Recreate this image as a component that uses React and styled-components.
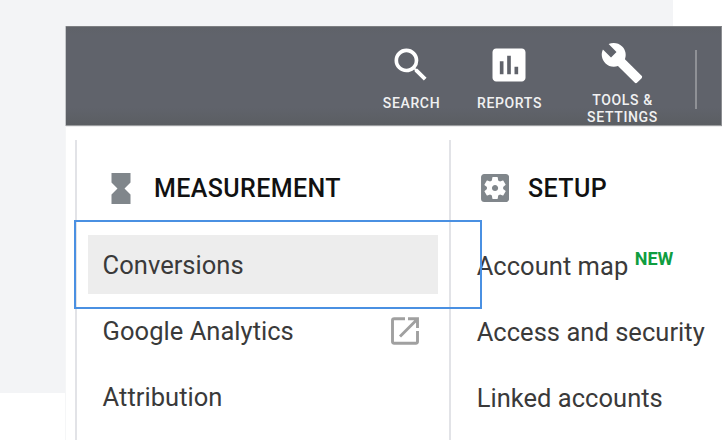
import React from "react";
import styled, { createGlobalStyle } from "styled-components";

const GlobalStyle = createGlobalStyle`
  *, *::before, *::after { box-sizing: border-box; }
  html, body { margin: 0; background: #fff; overflow: hidden; }
  body { font-family: Roboto, "Liberation Sans", sans-serif; }
  svg { display: block; flex: none; }
`;

const Page = styled.main`
  width: 722px;
  height: 440px;
  padding: 26px 0 0 66px;
  overflow: hidden;
  background: linear-gradient(#f3f4f6, #f3f4f6) 0 0 / 673px 393px no-repeat #fff;
`;

const Panel = styled.section`
  width: 656px;
  height: 414px;
  background: #fff;
  box-shadow: -1px 0 0 #f5f6f7;
`;

const TopBar = styled.header`
  display: flex;
  align-items: flex-start;
  height: 100px;
  padding-left: 305px;
  background: linear-gradient(#5f6268 0, #60636b 8px, #60636b 80px, #5b5e62 98px);
  border-top: 1px solid #7d7f82;
  border-bottom: 1px solid #9a9c9e;
  border-right: 1px solid #8b8d91;
  box-shadow: -1px 0 0 #c5c7ca, 0 1px 0 #ededee;
  color: #f1f1f2;
`;

const Tool = styled.div`
  display: flex;
  flex-direction: column;
  align-items: center;
  width: ${(p) => p.$width}px;
  padding-top: ${(p) => p.$top}px;
`;

const ToolLabel = styled.span`
  margin-top: ${(p) => p.$gap}px;
  padding-left: 1px;
  font-size: 14px;
  font-weight: 500;
  line-height: 17px;
  letter-spacing: 0.65px;
  text-align: center;
  white-space: pre-line;
`;

const BarDivider = styled.span`
  width: 2px;
  height: 59px;
  margin: 23px 0 0 18px;
  background: #8f9196;
`;

const Columns = styled.div`
  display: flex;
  height: 300px;
  margin: 14px 0 0 9px;
`;

const Column = styled.section`
  flex: none;
  width: ${(p) => p.$width}px;
  padding: ${(p) => p.$padding};
  border-left: 2px solid #e2e3e7;
`;

const Heading = styled.h2`
  display: flex;
  align-items: center;
  height: 32px;
  margin: 32px 0 ${(p) => p.$below}px;
  padding-left: ${(p) => p.$indent}px;
  gap: ${(p) => p.$gap}px;
  color: #111;
  font-size: 25px;
  font-weight: 500;
  letter-spacing: 0.4px;
`;

const Item = styled.div`
  display: flex;
  align-items: center;
  height: 59px;
  margin-bottom: 7px;
  padding: ${(p) => p.$padding || "0"};
  background: ${(p) => (p.$active ? "#ededed" : "transparent")};
  color: #3a3a3a;
  font-size: 25.5px;
  line-height: 30px;
  letter-spacing: 0.03px;
  white-space: nowrap;

  svg { margin-left: auto; }
`;

const NewTag = styled.sup`
  align-self: flex-start;
  margin: 13px 0 0 6.5px;
  color: #0f9d40;
  font-size: 18px;
  font-weight: 700;
  line-height: 20px;
  letter-spacing: 0;
`;

const Highlight = styled.div`
  position: absolute;
  left: 74px;
  top: 220px;
  width: 408px;
  height: 89px;
  border: 2px solid #4a90e2;
`;

const Glyph = ({ d, size = 44, color = "#fff" }) => (
  <svg width={size} height={size} viewBox="0 0 24 24" fill={color} aria-hidden="true">
    <path d={d} />
  </svg>
);

const SEARCH =
  "M15.5 14h-.79l-.28-.27A6.471 6.471 0 0 0 16 9.5 6.5 6.5 0 1 0 9.5 16c1.61 0 3.09-.59 4.23-1.57l.27.28v.79l5 4.99L20.49 19l-4.99-5zm-6 0C7.01 14 5 11.99 5 9.5S7.01 5 9.5 5 14 7.01 14 9.5 11.99 14 9.5 14z";
const REPORTS =
  "M19 3H5c-1.1 0-2 .9-2 2v14c0 1.1.9 2 2 2h14c1.1 0 2-.9 2-2V5c0-1.1-.9-2-2-2zM9 17H7v-7h2v7zm4 0h-2V7h2v10zm4 0h-2v-4h2v4z";
const WRENCH =
  "M22.7 19l-9.1-9.1c.9-2.3.4-5-1.5-6.9-2-2-5-2.4-7.4-1.3L9 6 6 9 1.6 4.7C.4 7.1.9 10.1 2.9 12.1c1.9 1.9 4.6 2.4 6.9 1.5l9.1 9.1c.4.4 1 .4 1.4 0l2.3-2.3c.5-.4.5-1.1.1-1.4z";
const GEAR_BOX =
  "M12 10c-1.1 0-2 .9-2 2s.9 2 2 2 2-.9 2-2-.9-2-2-2zm7-7H5c-1.11 0-2 .9-2 2v14c0 1.1.89 2 2 2h14c1.11 0 2-.9 2-2V5c0-1.1-.89-2-2-2zm-1.75 9c0 .23-.02.46-.05.68l1.48 1.16c.13.11.17.3.08.45l-1.4 2.42c-.09.15-.27.21-.43.15l-1.74-.7c-.36.28-.76.51-1.18.69l-.26 1.85c-.03.17-.18.3-.35.3h-2.8c-.17 0-.32-.13-.35-.29l-.26-1.85c-.43-.18-.82-.41-1.18-.69l-1.74.7c-.16.06-.34 0-.43-.15l-1.4-2.42c-.09-.15-.05-.34.08-.45l1.48-1.16c-.03-.23-.05-.46-.05-.69 0-.23.02-.46.05-.68l-1.48-1.16c-.13-.11-.17-.3-.08-.45l1.4-2.42c.09-.15.27-.21.43-.15l1.74.7c.36-.28.76-.51 1.18-.69l.26-1.85c.03-.17.18-.3.35-.3h2.8c.17 0 .32.13.35.29l.26 1.85c.43.18.82.41 1.18.69l1.74-.7c.16-.06.34 0 .43.15l1.4 2.42c.09.15.05.34-.08.45l-1.48 1.16c.03.23.05.46.05.69z";

const Hourglass = () => (
  <svg width="20" height="31" viewBox="0 0 20 31" fill="#80868b" aria-hidden="true">
    <path d="M.5 0H19.5V9.5L13.5 15.5L19.5 21.5V31H.5V21.5L6.5 15.5L.5 9.5Z" />
  </svg>
);

const OpenExternal = () => (
  <svg width="28" height="28" viewBox="0 0 28 28" fill="none" stroke="#a0a0a0" strokeWidth="2.9" aria-hidden="true">
    <path d="M14 1.7H3.2Q1.5 1.7 1.5 3.4V24.6Q1.5 26.3 3.2 26.3H24.8Q26.5 26.3 26.5 24.6V14" />
    <path d="M17 1.7H26.5V11M9 19.5L26 2.5" />
  </svg>
);

export default function App() {
  return (
    <>
      <GlobalStyle />
      <Page>
        <Panel>
          <TopBar>
            <Tool $width={80} $top={16}>
              <Glyph d={SEARCH} />
              <ToolLabel $gap={8}>SEARCH</ToolLabel>
            </Tool>
            <Tool $width={116} $top={16}>
              <Glyph d={REPORTS} />
              <ToolLabel $gap={8}>REPORTS</ToolLabel>
            </Tool>
            <Tool $width={110} $top={14}>
              <Glyph d={WRENCH} />
              <ToolLabel $gap={7}>{"TOOLS &\nSETTINGS"}</ToolLabel>
            </Tool>
            <BarDivider />
          </TopBar>
          <Columns>
            <Column $width={374} $padding="0 11px 0 11px">
              <Heading $indent={23} $gap={23} $below={31}>
                <Hourglass />
                MEASUREMENT
              </Heading>
              <Item $active $padding="0 18px 0 14.6px">Conversions</Item>
              <Item $padding="0 18.6px 0 14.6px">
                Google Analytics
                <OpenExternal />
              </Item>
              <Item $padding="0 18px 0 14.6px">Attribution</Item>
            </Column>
            <Column $width={273} $padding="0 0 0 25.7px">
              <Heading $indent={0.3} $gap={19} $below={32}>
                <svg width="32" height="28" viewBox="0.4 3 20.571 18" fill="#80868b" aria-hidden="true">
                  <path d={GEAR_BOX} />
                </svg>
                SETUP
              </Heading>
              <Item>
                Account map <NewTag>NEW</NewTag>
              </Item>
              <Item>Access and security</Item>
              <Item>Linked accounts</Item>
            </Column>
          </Columns>
        </Panel>
        <Highlight />
      </Page>
    </>
  );
}
